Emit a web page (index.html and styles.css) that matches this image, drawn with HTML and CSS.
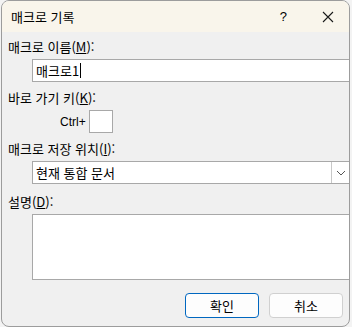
FILE: index.html
```html
<!DOCTYPE html>
<html lang="ko">
<head>
    <meta charset="UTF-8">
    <title>매크로 기록</title>
    <link rel="stylesheet" href="styles.css">
</head>
<body>
    <div class="dialog">
        <div class="titlebar">
            <span class="title">매크로 기록</span>
            <span class="help">?</span>
            <svg class="close" width="12" height="12" viewBox="0 0 12 12">
                <path d="M1 1 L11 11 M11 1 L1 11" stroke="#1a1a1a" stroke-width="1.1" fill="none"/>
            </svg>
        </div>
        <div class="body">
            <div class="label">매크로 이름(<u>M</u>):</div>
            <div class="field input">매크로1<span class="caret"></span></div>

            <div class="label">바로 가기 키(<u>K</u>):</div>
            <div class="shortcut">
                <span class="ctrl">Ctrl+</span>
                <span class="keybox"></span>
            </div>

            <div class="label">매크로 저장 위치(<u>I</u>):</div>
            <div class="field select">
                <span class="value">현재 통합 문서</span>
                <span class="drop">
                    <svg width="10" height="6" viewBox="0 0 10 6">
                        <path d="M1 1 L5 5 L9 1" stroke="#555" stroke-width="1" fill="none"/>
                    </svg>
                </span>
            </div>

            <div class="label">설명(<u>D</u>):</div>
            <div class="field textarea"></div>

            <div class="buttons">
                <button class="btn primary">확인</button>
                <button class="btn">취소</button>
            </div>
        </div>
    </div>
</body>
</html>
```

FILE: styles.css
```css
body, html {
    margin: 0;
    padding: 0;
    background-color: #f3f3f3;
}
body {
    font-family: "Noto Sans CJK KR", "Noto Sans", sans-serif;
    font-size: 13px;
    color: #000;
}
.dialog {
    width: 347px;
    height: 325px;
    margin-left: 1px;
    border: 1px solid #9c9c9c;
    border-radius: 8px;
    overflow: hidden;
    background-color: #f0f0f0;
}
.titlebar {
    height: 31px;
    background-color: #f9f5eb;
    display: flex;
    align-items: center;
    padding-left: 9px;
}
.title {
    flex: 1;
    font-size: 13px;
}
.help {
    font-family: "Liberation Sans", sans-serif;
    font-size: 13px;
    margin-right: 35px;
}
.close {
    margin-right: 15px;
}
.body {
    padding: 7px 5px 0 6px;
}
.label {
    height: 16px;
    line-height: 16px;
}
.label u {
    text-underline-offset: 1px;
}
.field {
    margin-left: 24px;
    width: 318px;
    border: 1px solid #a8a8a8;
    background-color: #fff;
    box-sizing: border-box;
}
.input {
    height: 23px;
    margin-top: 4px;
    margin-bottom: 8px;
    padding-left: 3px;
    display: flex;
    align-items: center;
}
.caret {
    display: inline-block;
    width: 1px;
    height: 15px;
    background-color: #000;
    margin-left: 1px;
}
.shortcut {
    display: flex;
    align-items: center;
    margin-top: 4px;
    margin-bottom: 8px;
    margin-left: 52px;
}
.ctrl {
    font-family: "Liberation Sans", sans-serif;
    font-size: 12px;
    margin-right: 3px;
}
.keybox {
    width: 24px;
    height: 23px;
    box-sizing: border-box;
    border: 1px solid #a8a8a8;
    background-color: #fff;
}
.select {
    height: 23px;
    margin-top: 4px;
    margin-bottom: 10px;
    display: flex;
    align-items: center;
}
.select .value {
    flex: 1;
    padding-left: 3px;
}
.drop {
    width: 17px;
    height: 21px;
    border-left: 1px solid #c8c8c8;
    display: flex;
    align-items: center;
    justify-content: center;
}
.textarea {
    height: 66px;
    margin-top: 4px;
}
.buttons {
    display: flex;
    justify-content: flex-end;
    gap: 10px;
    margin-top: 13px;
    padding-right: 1px;
}
.btn {
    width: 74px;
    height: 25px;
    font-family: "Noto Sans CJK KR", sans-serif;
    font-size: 13px;
    background-color: #fdfdfd;
    border: 1px solid #d0d0d0;
    border-radius: 4px;
    padding: 0;
}
.btn.primary {
    border-color: #0067c0;
}
```
